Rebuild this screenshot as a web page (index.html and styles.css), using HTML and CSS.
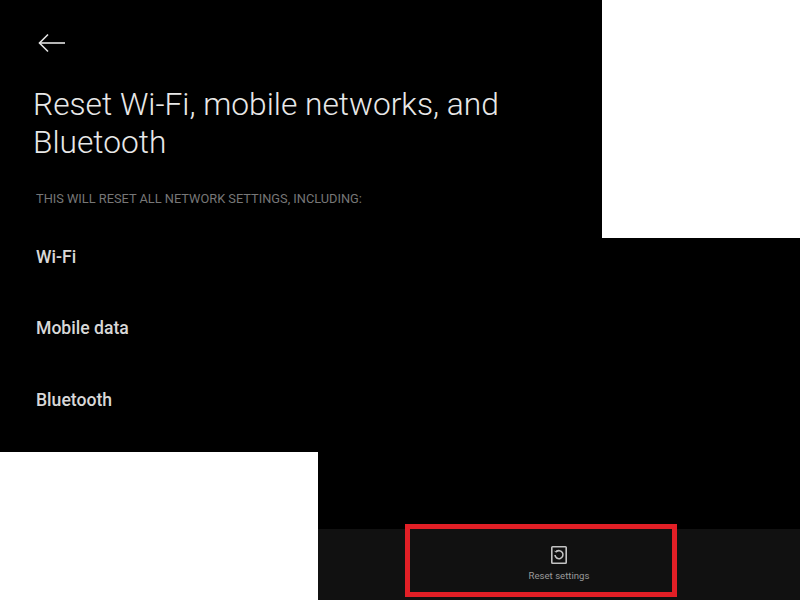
FILE: index.html

```html
<!DOCTYPE html>
<html lang="en">
<head>
    <meta charset="UTF-8">
    <meta name="viewport" content="width=device-width, initial-scale=1.0">
    <title>Reset Wi-Fi, mobile networks, and Bluetooth</title>
    <link rel="stylesheet" href="styles.css">
</head>
<body>

    <div class="page">
        <!-- first phone screenshot -->
        <div class="shot shot-top">
            <svg class="back" width="28" height="20" viewBox="0 0 28 20" fill="none" stroke="#e4e4e4" stroke-width="1.6">
                <path d="M1.5 10H27"/>
                <path d="M10 1.5L1.5 10L10 18.5"/>
            </svg>
            <h1>Reset Wi-Fi, mobile networks, and Bluetooth</h1>
            <p class="note">This will reset all network settings, including:</p>
            <ul class="list">
                <li>Wi-Fi</li>
                <li>Mobile data</li>
                <li>Bluetooth</li>
            </ul>
        </div>

        <!-- second screenshot, bottom bar with the highlighted button -->
        <div class="shot shot-bottom">
            <div class="bar">
                <div class="reset-btn">
                    <svg width="18" height="20" viewBox="0 0 18 20" fill="none" stroke="#c4c4c4" stroke-width="1.6">
                        <rect x="1.8" y="1.8" width="14.4" height="16.4" rx="0.8"/>
                        <path d="M6.2 6.8A4 4 0 1 1 5 10"/>
                        <path d="M4.6 6.2L6.4 7.2L7 5.2" stroke-width="1"/>
                    </svg>
                    <span>Reset settings</span>
                </div>
            </div>
        </div>
    </div>

</body>
</html>
```

FILE: styles.css

```css
html, body {
    margin: 0;
    padding: 0;
    background-color: #fff;
}
.page {
    width: 800px;
    height: 600px;
    overflow: hidden;
    display: grid;
    grid-template-columns: 318px 284px 198px;
    grid-template-rows: 238px 214px 148px;
    font-family: Roboto, sans-serif;
}
.shot {
    background-color: #000;
    box-sizing: border-box;
}
.shot-top {
    grid-column: 1 / 3;
    grid-row: 1 / 3;
    padding: 33px 36px 0 36px;
}
.shot-bottom {
    grid-column: 2 / 4;
    grid-row: 2 / 4;
    display: flex;
    flex-direction: column;
    justify-content: flex-end;
}
.back {
    display: block;
    margin-left: 2px;
}
h1 {
    margin: 33px 0 0 -3px;
    font-size: 31.7px;
    line-height: 38px;
    font-weight: 300;
    color: #e8e8e8;
}
.note {
    margin: 29px 0 0 0;
    font-size: 12.8px;
    line-height: 16px;
    color: #777;
    text-transform: uppercase;
}
.list {
    list-style: none;
    margin: 38.5px 0 0 0;
    padding: 0;
    display: flex;
    flex-direction: column;
    gap: 49px;
}
.list li {
    font-size: 17.6px;
    line-height: 22.5px;
    font-weight: 500;
    color: #d8d8d8;
}
.bar {
    height: 71px;
    background-color: #111;
    padding-left: 87px;
}
.reset-btn {
    box-sizing: border-box;
    width: 272px;
    height: 73px;
    margin-top: -5px;
    border: 5px solid #e21f26;
    display: flex;
    flex-direction: column;
    align-items: center;
    padding: 16px 0 0 36px;
}
.reset-btn svg {
    display: block;
}
.reset-btn span {
    margin-top: 5px;
    font-size: 9.6px;
    line-height: 12px;
    color: #999;
}
```
